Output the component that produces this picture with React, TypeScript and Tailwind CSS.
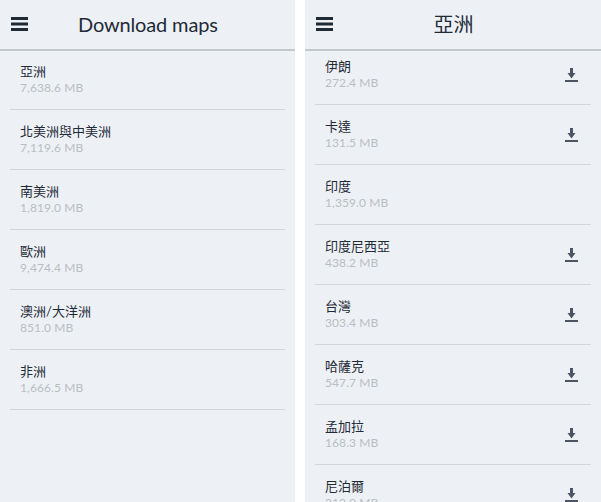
import React from 'react'

type MapRow = { name: string; size: string; download?: boolean }

const continents: MapRow[] = [
  { name: '亞洲', size: '7,638.6 MB' },
  { name: '北美洲與中美洲', size: '7,119.6 MB' },
  { name: '南美洲', size: '1,819.0 MB' },
  { name: '歐洲', size: '9,474.4 MB' },
  { name: '澳洲/大洋洲', size: '851.0 MB' },
  { name: '非洲', size: '1,666.5 MB' },
]

const asia: MapRow[] = [
  { name: '伊朗', size: '272.4 MB', download: true },
  { name: '卡達', size: '131.5 MB', download: true },
  { name: '印度', size: '1,359.0 MB' },
  { name: '印度尼西亞', size: '438.2 MB', download: true },
  { name: '台灣', size: '303.4 MB', download: true },
  { name: '哈薩克', size: '547.7 MB', download: true },
  { name: '孟加拉', size: '168.3 MB', download: true },
  { name: '尼泊爾', size: '212.0 MB', download: true },
]

const MenuIcon = () => (
  <svg width="18" height="14" viewBox="0 0 18 14" fill="#1f2a37">
    <rect x="0" y="0" width="17" height="3" />
    <rect x="0" y="5.5" width="17" height="3" />
    <rect x="0" y="11" width="17" height="3" />
  </svg>
)

const DownloadIcon = () => (
  <svg width="13" height="14" viewBox="0 0 13 14" fill="#4b5563">
    <path d="M5 0h3v5h2.5L6.5 10.5 2.5 5H5z" />
    <rect x="0" y="12" width="13" height="2" />
  </svg>
)

const Header = ({ title, center }: { title: string; center?: boolean }) => (
  <div className="relative z-10 flex h-[51px] shrink-0 items-center border-b-2 border-[#c3c8cc] bg-[#edf1f5] pb-[2px] pl-[11px]">
    <MenuIcon />
    <h1
      className={
        center
          ? 'flex-1 pr-[28px] text-center text-[20px] text-[#1f2a37]'
          : 'ml-[49px] text-[20px] tracking-[-0.15px] text-[#1f2a37]'
      }
    >
      {title}
    </h1>
  </div>
)

const Row = ({ row }: { row: MapRow }) => (
  <div className="flex h-[60px] shrink-0 items-center justify-between border-b border-[#d3d7db] pl-[10px] pr-[13px]">
    <div className="flex flex-col pb-[2px]">
      <span className="text-[13px] leading-[18px] text-[#1f2a37]">{row.name}</span>
      <span className="text-[12px] leading-[15px] tracking-[0.1px] text-[#b9bec3]">{row.size}</span>
    </div>
    {row.download && <DownloadIcon />}
  </div>
)

const App: React.FC = () => {
  return (
    <div className="flex h-[502px] w-[601px] justify-between overflow-hidden bg-white font-['Lato','Noto_Sans_CJK_TC',sans-serif]">
      <div className="flex w-[295px] flex-col bg-[#edf1f5]">
        <Header title="Download maps" />
        <div className="-mt-[1px] flex flex-col px-[10px]">
          {continents.map((row) => (
            <Row key={row.name} row={row} />
          ))}
        </div>
      </div>
      <div className="flex w-[296px] flex-col overflow-hidden bg-[#edf1f5]">
        <Header title="亞洲" center />
        <div className="-mt-[6px] flex flex-col px-[10px]">
          {asia.map((row) => (
            <Row key={row.name} row={row} />
          ))}
        </div>
      </div>
    </div>
  )
}

export default App
